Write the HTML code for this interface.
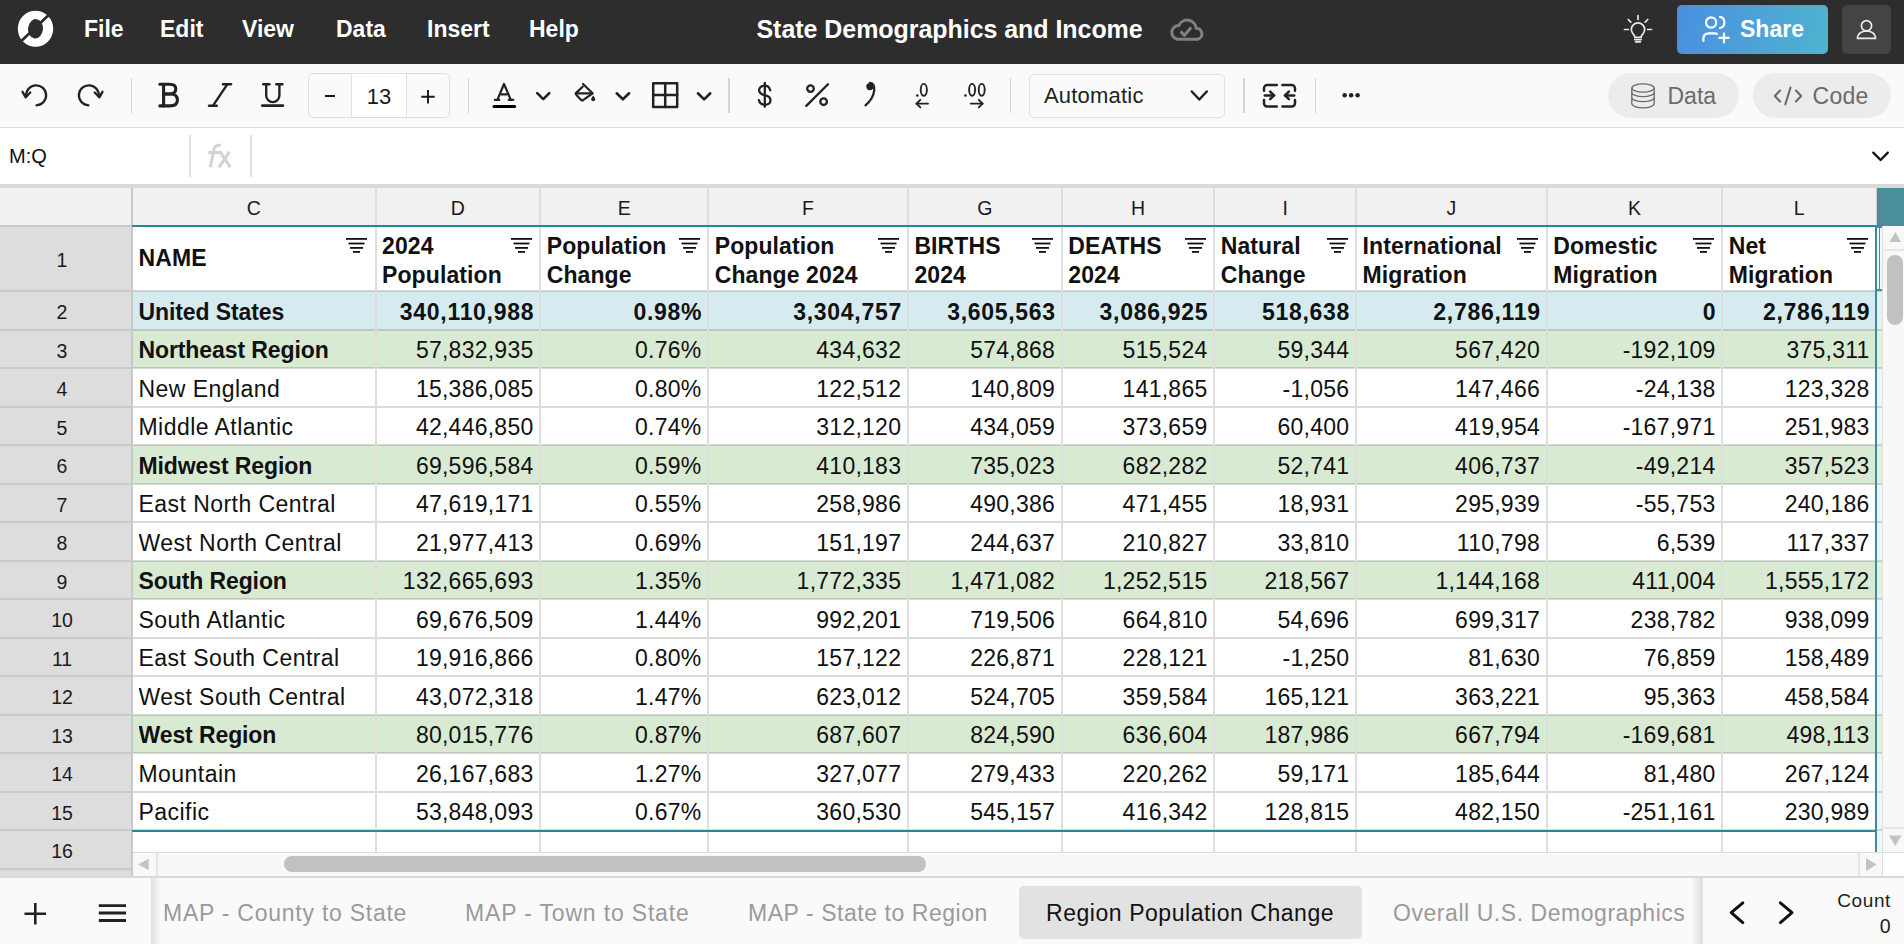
<!DOCTYPE html>
<html><head><meta charset="utf-8"><title>State Demographics and Income</title>
<style>
*{box-sizing:border-box;margin:0;padding:0}
html,body{width:1904px;height:944px;overflow:hidden;background:#fff;font-family:"Liberation Sans",sans-serif;color:#111}
.a{position:absolute}
svg{position:absolute;overflow:visible}
.menu{position:absolute;top:12px;color:#fff;font-size:23px;font-weight:bold;line-height:34px;white-space:nowrap}
.ch{position:absolute;top:188px;height:37px;background:#f1f1f1;text-align:center;font-size:19.5px;line-height:40px;color:#1a1a1a}
.vl{position:absolute;width:2px;background:#dedede}
.hl{position:absolute;height:2px;background:rgba(0,0,0,0.14)}
.cell{position:absolute;font-size:23px;white-space:nowrap;overflow:hidden;color:#111;letter-spacing:0.25px}
.b{font-weight:bold}
.num.b{letter-spacing:0.7px}
.rn{position:absolute;left:0;width:124px;text-align:center;font-size:19.5px;color:#1a1a1a}
.sep{position:absolute;width:1.2px;background:#d6d6d6}
.ic{stroke:#222;fill:none;stroke-width:2.3;stroke-linecap:round;stroke-linejoin:round}
.tab{position:absolute;top:886px;height:53px;line-height:54px;font-size:23px;color:#9a9a9a;white-space:nowrap;letter-spacing:0.55px}
</style></head><body>

<div class="a" style="left:0;top:0;width:1904px;height:64px;background:#2d2d2d"></div>
<svg style="left:0;top:0" width="70" height="64" viewBox="0 0 70 64">
<defs><mask id="lm"><rect width="70" height="64" fill="#fff"/><ellipse cx="35.5" cy="28.8" rx="7.5" ry="9.7" fill="#000" transform="rotate(6 35.5 28.8)"/><line x1="21" y1="41.2" x2="49" y2="14.7" stroke="#000" stroke-width="2.7"/></mask></defs>
<ellipse cx="35.5" cy="28.75" rx="17.7" ry="18.1" fill="#fff" mask="url(#lm)"/></svg>
<div class="menu" style="left:84px">File</div>
<div class="menu" style="left:160px">Edit</div>
<div class="menu" style="left:242px">View</div>
<div class="menu" style="left:336px">Data</div>
<div class="menu" style="left:427px">Insert</div>
<div class="menu" style="left:529px">Help</div>
<div class="menu" style="left:756.5px;top:12.4px;font-size:25px;letter-spacing:-0.05px">State Demographics and Income</div>
<svg style="left:1160px;top:10px" width="50" height="40" viewBox="1160 10 50 40"><path d="M1177.5 39.3 H1197.8 A5.6 5.6 0 0 0 1196.2 28.3 A9.1 9.1 0 0 0 1178.8 25.6 A6.9 6.9 0 0 0 1177.5 39.3 Z" fill="none" stroke="#808080" stroke-width="3" stroke-linejoin="round"/><path d="M1180.6 31.4 L1184.4 35.3 L1191.2 27.4" fill="none" stroke="#808080" stroke-width="3" stroke-linecap="butt" stroke-linejoin="miter"/></svg>
<svg style="left:1620px;top:12px" width="36" height="34" viewBox="0 0 36 34" fill="none" stroke="#e8e8e8" stroke-width="1.7" stroke-linecap="round">
<line x1="18" y1="3.5" x2="18" y2="7.5"/><line x1="8.2" y1="7.5" x2="10.8" y2="10.2"/><line x1="27.8" y1="7.5" x2="25.2" y2="10.2"/><line x1="4.5" y1="17.5" x2="8.3" y2="17.5"/><line x1="27.7" y1="17.5" x2="31.5" y2="17.5"/>
<path d="M14.8 25.4 V24.6 C14.8 23 11.3 21.5 11.3 17.6 A6.7 6.7 0 0 1 24.7 17.6 C24.7 21.5 21.2 23 21.2 24.6 V25.4 Z" stroke-linejoin="round"/><line x1="14.8" y1="27.6" x2="21.2" y2="27.6"/><line x1="15.6" y1="29.8" x2="20.4" y2="29.8"/></svg>
<div class="a" style="left:1677px;top:5px;width:151px;height:49px;border-radius:5px;background:linear-gradient(100deg,#4a8fe0 0%,#4fb4cf 100%)"></div>
<svg style="left:1700px;top:14px" width="32" height="32" viewBox="0 0 32 32" fill="none" stroke="#fff" stroke-width="2.2" stroke-linecap="round">
<circle cx="11.1" cy="8.5" r="5.1"/><path d="M20 2.9 A5.7 5.7 0 0 1 20 14"/><path d="M3.4 27 V24.8 Q3.4 19.4 8.8 19.4 H15.5 Q16.5 19.6 17 20"/><line x1="24" y1="19.6" x2="24" y2="28.4"/><line x1="19.3" y1="23.8" x2="28.8" y2="23.8"/></svg>
<div class="menu" style="left:1740px;top:12px">Share</div>
<div class="a" style="left:1842px;top:5px;width:49px;height:49px;border-radius:5px;background:#444"></div>
<svg style="left:1852px;top:16px" width="28" height="26" viewBox="0 0 28 26" fill="none" stroke="#ececec" stroke-width="1.7"><circle cx="14.5" cy="9.7" r="5.1"/><path d="M5.5 22.4 C5.5 17.6 9.6 15 14.5 15 C19.4 15 23.5 17.6 23.5 22.4 Z" stroke-linejoin="round"/></svg>
<div class="a" style="left:0;top:64px;width:1904px;height:64px;background:#fafafa;border-bottom:1.5px solid #dcdcdc"></div>
<svg style="left:16px;top:78px" width="40" height="34" viewBox="0 0 40 34"><path class="ic" d="M20.5 27.3 A10 10 0 1 0 10.2 18.5"/><path class="ic" d="M6.5 13.8 L9.7 19.3 L14.3 14.5"/></svg>
<svg style="left:68.5px;top:78px" width="40" height="34" viewBox="0 0 40 34"><g transform="translate(40 0) scale(-1 1)"><path class="ic" d="M20.5 27.3 A10 10 0 1 0 10.2 18.5"/><path class="ic" d="M6.5 13.8 L9.7 19.3 L14.3 14.5"/></g></svg>
<div class="sep" style="left:131.3px;top:78px;height:35px"></div>
<svg style="left:150px;top:76px" width="140" height="38" viewBox="150 76 140 38">
<g class="ic" style="stroke-width:3.1" transform="translate(1 0)">
<path d="M158.8 84.3 H168.5 C173 84.3 174.8 86.5 174.8 89 C174.8 91.8 172.6 94 168.5 94 H162.8"/>
<path d="M162.8 94 H169.5 C174.5 94 176.4 96.8 176.4 100 C176.4 103.5 173.8 105.9 169 105.9 H158.8"/>
<line x1="162.6" y1="84.3" x2="162.6" y2="105.9"/>
</g>
<g class="ic" style="stroke-width:2.4">
<line x1="223" y1="84.3" x2="231" y2="84.3"/><line x1="227.3" y1="84.3" x2="213" y2="105.7"/><line x1="209" y1="105.7" x2="216.8" y2="105.7"/>
</g>
<g class="ic" style="stroke-width:2.4">
<line x1="263.2" y1="84.3" x2="269.4" y2="84.3"/><line x1="276.3" y1="84.3" x2="282.4" y2="84.3"/>
<path d="M266.2 84.3 V95.5 A6.6 6.6 0 0 0 279.4 95.5 V84.3"/>
<line x1="262.3" y1="105.6" x2="282.9" y2="105.6" style="stroke-width:2.7"/>
</g></svg>
<div class="a" style="left:307.8px;top:73px;width:142.2px;height:45px;border:1.5px solid #dedede;border-radius:5px;background:#fafafa"></div>
<div class="a" style="left:351px;top:74px;width:55.5px;height:43px;background:#fff;border-left:1.5px solid #e2e2e2;border-right:1.5px solid #e2e2e2"></div>
<div class="a" style="left:325.3px;top:94.9px;width:9.4px;height:2.4px;background:#1a1a1a"></div>
<div class="a" style="left:352.5px;top:78px;width:53px;text-align:center;font-size:22px;line-height:38px;color:#1a1a1a">13</div>
<svg style="left:420px;top:89px" width="16" height="16" viewBox="0 0 16 16"><path d="M1.3 7.8 H14.7 M8 1 V14.6" stroke="#1a1a1a" stroke-width="1.9" fill="none"/></svg>
<div class="sep" style="left:467.9px;top:78px;height:35px"></div>
<svg style="left:486px;top:76px" width="130" height="38" viewBox="486 76 130 38">
<g class="ic" style="stroke-width:2.2"><path d="M497.5 99.6 L504 84 L510.7 99.6"/><line x1="501.2" y1="94.3" x2="507" y2="94.3"/><line x1="494.8" y1="99.8" x2="499.3" y2="99.8"/><line x1="508.7" y1="99.8" x2="513.3" y2="99.8"/></g>
<line x1="494" y1="106.6" x2="514.6" y2="106.6" stroke="#000" stroke-width="3" stroke-linecap="round"/>
<path class="ic" d="M537.2 93.1 L543.3 99.1 L549.3 93.1" style="stroke-width:2.6"/>
<g class="ic" style="stroke-width:2.2"><path d="M583 84 L592.6 93.3 L583.4 99.9 Q582.3 100.9 581.2 99.9 L576.2 94.8 Q575.3 93.8 576.2 92.9 L582.6 86.7"/><line x1="575.8" y1="93.4" x2="592.3" y2="93.4"/></g>
<path d="M593.2 95.6 Q595.2 98.2 595.2 99.2 A2 2 0 0 1 591.2 99.2 Q591.2 98.2 593.2 95.6 Z" fill="#222"/>
</svg>
<svg style="left:606px;top:76px" width="120" height="38" viewBox="606 76 120 38"><path class="ic" d="M616.7 93.3 L622.9 99.3 L629.1 93.3" style="stroke-width:2.6"/><g class="ic" style="stroke-width:2.5"><rect x="653.2" y="83.2" width="24" height="23.8"/><line x1="665.2" y1="83.2" x2="665.2" y2="107"/><line x1="653.2" y1="95.1" x2="677.2" y2="95.1"/></g><path class="ic" d="M697.9 93.3 L704.1 99.4 L710.3 93.3" style="stroke-width:2.6"/></svg>
<div class="sep" style="left:728.4px;top:78px;height:35px"></div>
<svg style="left:750px;top:78px" width="30" height="34" viewBox="750 78 30 34"><g class="ic" style="stroke-width:2.3"><path d="M770.2 90.3 C769.4 87.3 767.3 85.7 764.8 85.7 C761.6 85.7 759.1 87.6 759.1 90.3 C759.1 93.2 761.5 94.4 764.8 95.2 C768.3 96 770.5 97.6 770.5 100.5 C770.5 103 768 104.8 764.8 104.8 C761.8 104.8 759.5 103.1 758.9 100.1"/><line x1="764.8" y1="83" x2="764.8" y2="106.8"/></g></svg>
<svg style="left:800px;top:78px" width="200" height="34" viewBox="800 78 200 34">
<g class="ic" style="stroke-width:2.3"><circle cx="810.5" cy="88.6" r="3.3"/><circle cx="823.6" cy="101.7" r="3.3"/><line x1="806.3" y1="105.9" x2="828" y2="84.2"/></g>
<path d="M870 82.8 C873.5 83 874.6 86.5 874.2 90.5 C873.6 96 870 101.5 865.5 105.3" fill="none" stroke="#222" stroke-width="2.3" stroke-linecap="round"/><circle cx="869.9" cy="86.6" r="3.6" fill="#222"/>
</svg>
<svg style="left:900px;top:78px" width="100" height="22" viewBox="900 78 100 22"><g fill="none" stroke="#222" stroke-width="1.9"><ellipse cx="923.8" cy="89.8" rx="3.1" ry="5.9"/><ellipse cx="972.1" cy="89.8" rx="3" ry="5.9"/><ellipse cx="981.7" cy="89.8" rx="3" ry="5.9"/></g><g fill="#222"><circle cx="917.3" cy="95.6" r="1.25"/><circle cx="965.4" cy="95.6" r="1.25"/></g></svg>
<svg style="left:900px;top:96px" width="100" height="16" viewBox="900 96 100 16"><g class="ic" style="stroke-width:1.9"><line x1="916.5" y1="103.6" x2="928" y2="103.6"/><path d="M920.3 99.8 L916.5 103.6 L920.3 107.4"/><line x1="970.8" y1="103.6" x2="982.6" y2="103.6"/><path d="M978.8 99.8 L982.6 103.6 L978.8 107.4"/></g></svg>
<div class="sep" style="left:1010.2px;top:78px;height:35px"></div>
<div class="a" style="left:1029px;top:74px;width:196px;height:43.5px;border:1.5px solid #e0e0e0;border-radius:5px;background:#fafafa"></div>
<div class="a" style="left:1044px;top:78px;font-size:22px;line-height:36px;color:#222;letter-spacing:0.2px">Automatic</div>
<svg style="left:1185px;top:85px" width="30" height="22" viewBox="1185 85 30 22"><path class="ic" d="M1191.8 91.5 L1199.3 99.5 L1206.8 91.5" style="stroke-width:2.5"/></svg>
<div class="sep" style="left:1243.4px;top:78px;height:35px"></div>
<svg style="left:1258px;top:80px" width="44" height="32" viewBox="1258 80 44 32"><g class="ic" style="stroke-width:2.5">
<path d="M1264 90.8 V88.3 A3.2 3.2 0 0 1 1267.2 85.1 H1276.8"/><path d="M1264 100 V103.3 A3.2 3.2 0 0 0 1267.2 106.5 H1276.8"/>
<path d="M1295 90.8 V88.3 A3.2 3.2 0 0 0 1291.8 85.1 H1282.4"/><path d="M1295 100 V103.3 A3.2 3.2 0 0 1 1291.8 106.5 H1282.4"/>
<line x1="1264.8" y1="95.4" x2="1274" y2="95.4"/><path d="M1270.2 91.7 L1274 95.4 L1270.2 99.2"/>
<line x1="1285" y1="95.4" x2="1294.2" y2="95.4"/><path d="M1288.9 91.7 L1285 95.4 L1288.9 99.2"/>
</g></svg>
<div class="sep" style="left:1314.8px;top:78px;height:35px"></div>
<svg style="left:1338px;top:90px" width="26" height="10" viewBox="1338 90 26 10"><g fill="#222"><circle cx="1344.7" cy="95.2" r="2.25"/><circle cx="1351.1" cy="95.2" r="2.25"/><circle cx="1357.6" cy="95.2" r="2.25"/></g></svg>
<div class="a" style="left:1608px;top:73px;width:131px;height:45px;border-radius:23px;background:#ececec"></div>
<svg style="left:1628px;top:80px" width="30" height="32" viewBox="0 0 30 32" fill="none" stroke="#6a6a6a" stroke-width="1.3">
<ellipse cx="15" cy="8" rx="11.2" ry="4.2"/><path d="M3.8 8 V23.6 A11.2 4.2 0 0 0 26.2 23.6 V8"/><path d="M3.8 12.5 A11.2 4.2 0 0 0 26.2 12.5"/><path d="M3.8 17.5 A11.2 4.2 0 0 0 26.2 17.5"/></svg>
<div class="a" style="left:1667.5px;top:78px;font-size:23px;line-height:36px;color:#6a6a6a">Data</div>
<div class="a" style="left:1753px;top:73px;width:138px;height:45px;border-radius:23px;background:#ececec"></div>
<svg style="left:1770px;top:84px" width="36" height="24" viewBox="0 0 36 24" fill="none" stroke="#6a6a6a" stroke-width="2.1" stroke-linecap="round" stroke-linejoin="round"><path d="M10 6.5 L4.8 12 L10 17.5"/><path d="M26 6.5 L31.2 12 L26 17.5"/><line x1="20.5" y1="3.5" x2="15.3" y2="20.5"/></svg>
<div class="a" style="left:1812.5px;top:78px;font-size:23px;line-height:36px;color:#6a6a6a;letter-spacing:0.3px">Code</div>
<div class="a" style="left:0;top:128px;width:1904px;height:56px;background:#fff"></div>
<div class="a" style="left:9px;top:139px;font-size:20px;line-height:34px;color:#111">M:Q</div>
<div class="sep" style="left:189px;top:135px;height:42px;width:2px;background:#dedede"></div>
<svg style="left:200px;top:138px" width="40" height="36" viewBox="200 138 40 36"><g fill="none" stroke="#d3d3d3" stroke-width="3"><path d="M220.8 145.3 C218.3 144.9 214.8 145.2 213.9 149.5 L210.4 167.3"/><line x1="208.2" y1="152.6" x2="221" y2="152.6"/><line x1="218.9" y1="167.3" x2="229.6" y2="151.6"/><line x1="220" y1="151.6" x2="230.4" y2="167.3"/></g></svg>
<div class="sep" style="left:250px;top:135px;height:42px;width:2px;background:#dedede"></div>
<svg style="left:1868px;top:146px" width="26" height="20" viewBox="0 0 26 20"><path class="ic" d="M5.3 6.6 L12.6 14 L19.8 6.6" style="stroke-width:2.3;stroke:#111"/></svg>
<div class="a" style="left:0;top:184px;width:1904px;height:4px;background:#dadada"></div>
<div class="a" style="left:0;top:188px;width:132.5px;height:690px;background:#dddddd"></div>
<div class="a" style="left:132.5px;top:225.5px;width:1750px;height:626px;background:#fff"></div>
<div class="ch" style="left:132px;width:243.5px">C</div>
<div class="ch" style="left:375.5px;width:164.7px">D</div>
<div class="ch" style="left:540.2px;width:168px">E</div>
<div class="ch" style="left:708.2px;width:199.7px">F</div>
<div class="ch" style="left:907.9px;width:153.9px">G</div>
<div class="ch" style="left:1061.8px;width:152.4px">H</div>
<div class="ch" style="left:1214.2px;width:141.8px">I</div>
<div class="ch" style="left:1356px;width:190.7px">J</div>
<div class="ch" style="left:1546.7px;width:175.5px">K</div>
<div class="ch" style="left:1722.2px;width:154.1px">L</div>
<div class="a" style="left:0;top:188px;width:132px;height:38.5px;background:#f1f1f1;border-bottom:2px solid #c9c9c9"></div>
<div class="a" style="left:1877px;top:188px;width:27px;height:37.5px;background:#4a8e9b"></div>
<div class="a" style="left:132.5px;top:291px;width:1744px;height:38.5px;background:#d6ebf0"></div>
<div class="a" style="left:1877px;top:291px;width:5px;height:38.5px;background:#e3f1f4"></div>
<div class="a" style="left:132.5px;top:329.5px;width:1744px;height:38.5px;background:#d9ead3"></div>
<div class="a" style="left:1877px;top:329.5px;width:5px;height:38.5px;background:#e4f0df"></div>
<div class="a" style="left:132.5px;top:445px;width:1744px;height:38.5px;background:#d9ead3"></div>
<div class="a" style="left:1877px;top:445px;width:5px;height:38.5px;background:#e4f0df"></div>
<div class="a" style="left:132.5px;top:560.5px;width:1744px;height:38.5px;background:#d9ead3"></div>
<div class="a" style="left:1877px;top:560.5px;width:5px;height:38.5px;background:#e4f0df"></div>
<div class="a" style="left:132.5px;top:714.5px;width:1744px;height:38.5px;background:#d9ead3"></div>
<div class="a" style="left:1877px;top:714.5px;width:5px;height:38.5px;background:#e4f0df"></div>
<div class="a" style="left:1877px;top:291px;width:5px;height:560px;background:#eef6f8;z-index:0"></div>
<div class="a" style="left:1877px;top:291px;width:5px;height:38.5px;background:#e3f1f4"></div>
<div class="a" style="left:1877px;top:329.5px;width:5px;height:38.5px;background:#e4f0df"></div>
<div class="a" style="left:1877px;top:445px;width:5px;height:38.5px;background:#e4f0df"></div>
<div class="a" style="left:1877px;top:560.5px;width:5px;height:38.5px;background:#e4f0df"></div>
<div class="a" style="left:1877px;top:714.5px;width:5px;height:38.5px;background:#e4f0df"></div>
<div class="hl" style="left:132.5px;top:290px;width:1750px"></div>
<div class="hl" style="left:132.5px;top:328.5px;width:1750px"></div>
<div class="hl" style="left:132.5px;top:367px;width:1750px"></div>
<div class="hl" style="left:132.5px;top:405.5px;width:1750px"></div>
<div class="hl" style="left:132.5px;top:444px;width:1750px"></div>
<div class="hl" style="left:132.5px;top:482.5px;width:1750px"></div>
<div class="hl" style="left:132.5px;top:521px;width:1750px"></div>
<div class="hl" style="left:132.5px;top:559.5px;width:1750px"></div>
<div class="hl" style="left:132.5px;top:598px;width:1750px"></div>
<div class="hl" style="left:132.5px;top:636.5px;width:1750px"></div>
<div class="hl" style="left:132.5px;top:675px;width:1750px"></div>
<div class="hl" style="left:132.5px;top:713.5px;width:1750px"></div>
<div class="hl" style="left:132.5px;top:752px;width:1750px"></div>
<div class="hl" style="left:132.5px;top:790.5px;width:1750px"></div>
<div class="hl" style="left:132.5px;top:829px;width:1750px"></div>
<div class="hl" style="left:132.5px;top:867.5px;width:1750px"></div>
<div class="hl" style="left:0;top:290px;width:132.5px;background:#cacaca"></div>
<div class="hl" style="left:0;top:328.5px;width:132.5px;background:#cacaca"></div>
<div class="hl" style="left:0;top:367px;width:132.5px;background:#cacaca"></div>
<div class="hl" style="left:0;top:405.5px;width:132.5px;background:#cacaca"></div>
<div class="hl" style="left:0;top:444px;width:132.5px;background:#cacaca"></div>
<div class="hl" style="left:0;top:482.5px;width:132.5px;background:#cacaca"></div>
<div class="hl" style="left:0;top:521px;width:132.5px;background:#cacaca"></div>
<div class="hl" style="left:0;top:559.5px;width:132.5px;background:#cacaca"></div>
<div class="hl" style="left:0;top:598px;width:132.5px;background:#cacaca"></div>
<div class="hl" style="left:0;top:636.5px;width:132.5px;background:#cacaca"></div>
<div class="hl" style="left:0;top:675px;width:132.5px;background:#cacaca"></div>
<div class="hl" style="left:0;top:713.5px;width:132.5px;background:#cacaca"></div>
<div class="hl" style="left:0;top:752px;width:132.5px;background:#cacaca"></div>
<div class="hl" style="left:0;top:790.5px;width:132.5px;background:#cacaca"></div>
<div class="hl" style="left:0;top:829px;width:132.5px;background:#cacaca"></div>
<div class="hl" style="left:0;top:867.5px;width:132.5px;background:#cacaca"></div>
<div class="vl" style="left:131px;top:188px;height:664px"></div>
<div class="vl" style="left:374.5px;top:188px;height:664px"></div>
<div class="vl" style="left:539.2px;top:188px;height:664px"></div>
<div class="vl" style="left:707.2px;top:188px;height:664px"></div>
<div class="vl" style="left:906.9px;top:188px;height:664px"></div>
<div class="vl" style="left:1060.8px;top:188px;height:664px"></div>
<div class="vl" style="left:1213.2px;top:188px;height:664px"></div>
<div class="vl" style="left:1355px;top:188px;height:664px"></div>
<div class="vl" style="left:1545.7px;top:188px;height:664px"></div>
<div class="vl" style="left:1721.2px;top:188px;height:664px"></div>
<div class="cell b" style="left:138.5px;top:244px;line-height:29px;letter-spacing:0.1px">NAME</div>
<svg style="left:346px;top:236px" width="22" height="18" viewBox="0 0 22 18"><g fill="#111"><rect x="0" y="2" width="21" height="1.8"/><rect x="2.5" y="6.6" width="16" height="1.8"/><rect x="4" y="11" width="13" height="1.8"/><rect x="7" y="15" width="7" height="1.8"/></g></svg>
<div class="cell b" style="left:382px;top:232px;line-height:29px;letter-spacing:0.1px">2024<br>Population</div>
<svg style="left:510.7px;top:236px" width="22" height="18" viewBox="0 0 22 18"><g fill="#111"><rect x="0" y="2" width="21" height="1.8"/><rect x="2.5" y="6.6" width="16" height="1.8"/><rect x="4" y="11" width="13" height="1.8"/><rect x="7" y="15" width="7" height="1.8"/></g></svg>
<div class="cell b" style="left:546.7px;top:232px;line-height:29px;letter-spacing:0.1px">Population<br>Change</div>
<svg style="left:678.7px;top:236px" width="22" height="18" viewBox="0 0 22 18"><g fill="#111"><rect x="0" y="2" width="21" height="1.8"/><rect x="2.5" y="6.6" width="16" height="1.8"/><rect x="4" y="11" width="13" height="1.8"/><rect x="7" y="15" width="7" height="1.8"/></g></svg>
<div class="cell b" style="left:714.7px;top:232px;line-height:29px;letter-spacing:0.1px">Population<br>Change 2024</div>
<svg style="left:878.4px;top:236px" width="22" height="18" viewBox="0 0 22 18"><g fill="#111"><rect x="0" y="2" width="21" height="1.8"/><rect x="2.5" y="6.6" width="16" height="1.8"/><rect x="4" y="11" width="13" height="1.8"/><rect x="7" y="15" width="7" height="1.8"/></g></svg>
<div class="cell b" style="left:914.4px;top:232px;line-height:29px;letter-spacing:0.1px">BIRTHS<br>2024</div>
<svg style="left:1032.3px;top:236px" width="22" height="18" viewBox="0 0 22 18"><g fill="#111"><rect x="0" y="2" width="21" height="1.8"/><rect x="2.5" y="6.6" width="16" height="1.8"/><rect x="4" y="11" width="13" height="1.8"/><rect x="7" y="15" width="7" height="1.8"/></g></svg>
<div class="cell b" style="left:1068.3px;top:232px;line-height:29px;letter-spacing:0.1px">DEATHS<br>2024</div>
<svg style="left:1184.7px;top:236px" width="22" height="18" viewBox="0 0 22 18"><g fill="#111"><rect x="0" y="2" width="21" height="1.8"/><rect x="2.5" y="6.6" width="16" height="1.8"/><rect x="4" y="11" width="13" height="1.8"/><rect x="7" y="15" width="7" height="1.8"/></g></svg>
<div class="cell b" style="left:1220.7px;top:232px;line-height:29px;letter-spacing:0.1px">Natural<br>Change</div>
<svg style="left:1326.5px;top:236px" width="22" height="18" viewBox="0 0 22 18"><g fill="#111"><rect x="0" y="2" width="21" height="1.8"/><rect x="2.5" y="6.6" width="16" height="1.8"/><rect x="4" y="11" width="13" height="1.8"/><rect x="7" y="15" width="7" height="1.8"/></g></svg>
<div class="cell b" style="left:1362.5px;top:232px;line-height:29px;letter-spacing:0.1px">International<br>Migration</div>
<svg style="left:1517.2px;top:236px" width="22" height="18" viewBox="0 0 22 18"><g fill="#111"><rect x="0" y="2" width="21" height="1.8"/><rect x="2.5" y="6.6" width="16" height="1.8"/><rect x="4" y="11" width="13" height="1.8"/><rect x="7" y="15" width="7" height="1.8"/></g></svg>
<div class="cell b" style="left:1553.2px;top:232px;line-height:29px;letter-spacing:0.1px">Domestic<br>Migration</div>
<svg style="left:1692.7px;top:236px" width="22" height="18" viewBox="0 0 22 18"><g fill="#111"><rect x="0" y="2" width="21" height="1.8"/><rect x="2.5" y="6.6" width="16" height="1.8"/><rect x="4" y="11" width="13" height="1.8"/><rect x="7" y="15" width="7" height="1.8"/></g></svg>
<div class="cell b" style="left:1728.7px;top:232px;line-height:29px;letter-spacing:0.1px">Net<br>Migration</div>
<svg style="left:1846.8px;top:236px" width="22" height="18" viewBox="0 0 22 18"><g fill="#111"><rect x="0" y="2" width="21" height="1.8"/><rect x="2.5" y="6.6" width="16" height="1.8"/><rect x="4" y="11" width="13" height="1.8"/><rect x="7" y="15" width="7" height="1.8"/></g></svg>
<div class="cell b" style="left:138.5px;top:292.5px;width:230px;height:38.5px;line-height:38.5px;letter-spacing:-0.1px;">United States</div>
<div class="cell b num" style="left:382px;top:292.5px;width:152.2px;height:38.5px;line-height:38.5px;text-align:right;">340,110,988</div>
<div class="cell b num" style="left:546.7px;top:292.5px;width:155.5px;height:38.5px;line-height:38.5px;text-align:right;">0.98%</div>
<div class="cell b num" style="left:714.7px;top:292.5px;width:187.2px;height:38.5px;line-height:38.5px;text-align:right;">3,304,757</div>
<div class="cell b num" style="left:914.4px;top:292.5px;width:141.4px;height:38.5px;line-height:38.5px;text-align:right;">3,605,563</div>
<div class="cell b num" style="left:1068.3px;top:292.5px;width:139.9px;height:38.5px;line-height:38.5px;text-align:right;">3,086,925</div>
<div class="cell b num" style="left:1220.7px;top:292.5px;width:129.3px;height:38.5px;line-height:38.5px;text-align:right;">518,638</div>
<div class="cell b num" style="left:1362.5px;top:292.5px;width:178.2px;height:38.5px;line-height:38.5px;text-align:right;">2,786,119</div>
<div class="cell b num" style="left:1553.2px;top:292.5px;width:163px;height:38.5px;line-height:38.5px;text-align:right;">0</div>
<div class="cell b num" style="left:1728.7px;top:292.5px;width:141.6px;height:38.5px;line-height:38.5px;text-align:right;">2,786,119</div>
<div class="cell b" style="left:138.5px;top:331px;width:230px;height:38.5px;line-height:38.5px;letter-spacing:-0.1px;">Northeast Region</div>
<div class="cell num" style="left:382px;top:331px;width:151.5px;height:38.5px;line-height:38.5px;text-align:right;">57,832,935</div>
<div class="cell num" style="left:546.7px;top:331px;width:154.8px;height:38.5px;line-height:38.5px;text-align:right;">0.76%</div>
<div class="cell num" style="left:714.7px;top:331px;width:186.5px;height:38.5px;line-height:38.5px;text-align:right;">434,632</div>
<div class="cell num" style="left:914.4px;top:331px;width:140.7px;height:38.5px;line-height:38.5px;text-align:right;">574,868</div>
<div class="cell num" style="left:1068.3px;top:331px;width:139.2px;height:38.5px;line-height:38.5px;text-align:right;">515,524</div>
<div class="cell num" style="left:1220.7px;top:331px;width:128.6px;height:38.5px;line-height:38.5px;text-align:right;">59,344</div>
<div class="cell num" style="left:1362.5px;top:331px;width:177.5px;height:38.5px;line-height:38.5px;text-align:right;">567,420</div>
<div class="cell num" style="left:1553.2px;top:331px;width:162.3px;height:38.5px;line-height:38.5px;text-align:right;">-192,109</div>
<div class="cell num" style="left:1728.7px;top:331px;width:140.9px;height:38.5px;line-height:38.5px;text-align:right;">375,311</div>
<div class="cell" style="left:138.5px;top:369.5px;width:230px;height:38.5px;line-height:38.5px;letter-spacing:0.45px;">New England</div>
<div class="cell num" style="left:382px;top:369.5px;width:151.5px;height:38.5px;line-height:38.5px;text-align:right;">15,386,085</div>
<div class="cell num" style="left:546.7px;top:369.5px;width:154.8px;height:38.5px;line-height:38.5px;text-align:right;">0.80%</div>
<div class="cell num" style="left:714.7px;top:369.5px;width:186.5px;height:38.5px;line-height:38.5px;text-align:right;">122,512</div>
<div class="cell num" style="left:914.4px;top:369.5px;width:140.7px;height:38.5px;line-height:38.5px;text-align:right;">140,809</div>
<div class="cell num" style="left:1068.3px;top:369.5px;width:139.2px;height:38.5px;line-height:38.5px;text-align:right;">141,865</div>
<div class="cell num" style="left:1220.7px;top:369.5px;width:128.6px;height:38.5px;line-height:38.5px;text-align:right;">-1,056</div>
<div class="cell num" style="left:1362.5px;top:369.5px;width:177.5px;height:38.5px;line-height:38.5px;text-align:right;">147,466</div>
<div class="cell num" style="left:1553.2px;top:369.5px;width:162.3px;height:38.5px;line-height:38.5px;text-align:right;">-24,138</div>
<div class="cell num" style="left:1728.7px;top:369.5px;width:140.9px;height:38.5px;line-height:38.5px;text-align:right;">123,328</div>
<div class="cell" style="left:138.5px;top:408px;width:230px;height:38.5px;line-height:38.5px;letter-spacing:0.45px;">Middle Atlantic</div>
<div class="cell num" style="left:382px;top:408px;width:151.5px;height:38.5px;line-height:38.5px;text-align:right;">42,446,850</div>
<div class="cell num" style="left:546.7px;top:408px;width:154.8px;height:38.5px;line-height:38.5px;text-align:right;">0.74%</div>
<div class="cell num" style="left:714.7px;top:408px;width:186.5px;height:38.5px;line-height:38.5px;text-align:right;">312,120</div>
<div class="cell num" style="left:914.4px;top:408px;width:140.7px;height:38.5px;line-height:38.5px;text-align:right;">434,059</div>
<div class="cell num" style="left:1068.3px;top:408px;width:139.2px;height:38.5px;line-height:38.5px;text-align:right;">373,659</div>
<div class="cell num" style="left:1220.7px;top:408px;width:128.6px;height:38.5px;line-height:38.5px;text-align:right;">60,400</div>
<div class="cell num" style="left:1362.5px;top:408px;width:177.5px;height:38.5px;line-height:38.5px;text-align:right;">419,954</div>
<div class="cell num" style="left:1553.2px;top:408px;width:162.3px;height:38.5px;line-height:38.5px;text-align:right;">-167,971</div>
<div class="cell num" style="left:1728.7px;top:408px;width:140.9px;height:38.5px;line-height:38.5px;text-align:right;">251,983</div>
<div class="cell b" style="left:138.5px;top:446.5px;width:230px;height:38.5px;line-height:38.5px;letter-spacing:-0.1px;">Midwest Region</div>
<div class="cell num" style="left:382px;top:446.5px;width:151.5px;height:38.5px;line-height:38.5px;text-align:right;">69,596,584</div>
<div class="cell num" style="left:546.7px;top:446.5px;width:154.8px;height:38.5px;line-height:38.5px;text-align:right;">0.59%</div>
<div class="cell num" style="left:714.7px;top:446.5px;width:186.5px;height:38.5px;line-height:38.5px;text-align:right;">410,183</div>
<div class="cell num" style="left:914.4px;top:446.5px;width:140.7px;height:38.5px;line-height:38.5px;text-align:right;">735,023</div>
<div class="cell num" style="left:1068.3px;top:446.5px;width:139.2px;height:38.5px;line-height:38.5px;text-align:right;">682,282</div>
<div class="cell num" style="left:1220.7px;top:446.5px;width:128.6px;height:38.5px;line-height:38.5px;text-align:right;">52,741</div>
<div class="cell num" style="left:1362.5px;top:446.5px;width:177.5px;height:38.5px;line-height:38.5px;text-align:right;">406,737</div>
<div class="cell num" style="left:1553.2px;top:446.5px;width:162.3px;height:38.5px;line-height:38.5px;text-align:right;">-49,214</div>
<div class="cell num" style="left:1728.7px;top:446.5px;width:140.9px;height:38.5px;line-height:38.5px;text-align:right;">357,523</div>
<div class="cell" style="left:138.5px;top:485px;width:230px;height:38.5px;line-height:38.5px;letter-spacing:0.45px;">East North Central</div>
<div class="cell num" style="left:382px;top:485px;width:151.5px;height:38.5px;line-height:38.5px;text-align:right;">47,619,171</div>
<div class="cell num" style="left:546.7px;top:485px;width:154.8px;height:38.5px;line-height:38.5px;text-align:right;">0.55%</div>
<div class="cell num" style="left:714.7px;top:485px;width:186.5px;height:38.5px;line-height:38.5px;text-align:right;">258,986</div>
<div class="cell num" style="left:914.4px;top:485px;width:140.7px;height:38.5px;line-height:38.5px;text-align:right;">490,386</div>
<div class="cell num" style="left:1068.3px;top:485px;width:139.2px;height:38.5px;line-height:38.5px;text-align:right;">471,455</div>
<div class="cell num" style="left:1220.7px;top:485px;width:128.6px;height:38.5px;line-height:38.5px;text-align:right;">18,931</div>
<div class="cell num" style="left:1362.5px;top:485px;width:177.5px;height:38.5px;line-height:38.5px;text-align:right;">295,939</div>
<div class="cell num" style="left:1553.2px;top:485px;width:162.3px;height:38.5px;line-height:38.5px;text-align:right;">-55,753</div>
<div class="cell num" style="left:1728.7px;top:485px;width:140.9px;height:38.5px;line-height:38.5px;text-align:right;">240,186</div>
<div class="cell" style="left:138.5px;top:523.5px;width:230px;height:38.5px;line-height:38.5px;letter-spacing:0.45px;">West North Central</div>
<div class="cell num" style="left:382px;top:523.5px;width:151.5px;height:38.5px;line-height:38.5px;text-align:right;">21,977,413</div>
<div class="cell num" style="left:546.7px;top:523.5px;width:154.8px;height:38.5px;line-height:38.5px;text-align:right;">0.69%</div>
<div class="cell num" style="left:714.7px;top:523.5px;width:186.5px;height:38.5px;line-height:38.5px;text-align:right;">151,197</div>
<div class="cell num" style="left:914.4px;top:523.5px;width:140.7px;height:38.5px;line-height:38.5px;text-align:right;">244,637</div>
<div class="cell num" style="left:1068.3px;top:523.5px;width:139.2px;height:38.5px;line-height:38.5px;text-align:right;">210,827</div>
<div class="cell num" style="left:1220.7px;top:523.5px;width:128.6px;height:38.5px;line-height:38.5px;text-align:right;">33,810</div>
<div class="cell num" style="left:1362.5px;top:523.5px;width:177.5px;height:38.5px;line-height:38.5px;text-align:right;">110,798</div>
<div class="cell num" style="left:1553.2px;top:523.5px;width:162.3px;height:38.5px;line-height:38.5px;text-align:right;">6,539</div>
<div class="cell num" style="left:1728.7px;top:523.5px;width:140.9px;height:38.5px;line-height:38.5px;text-align:right;">117,337</div>
<div class="cell b" style="left:138.5px;top:562px;width:230px;height:38.5px;line-height:38.5px;letter-spacing:-0.1px;">South Region</div>
<div class="cell num" style="left:382px;top:562px;width:151.5px;height:38.5px;line-height:38.5px;text-align:right;">132,665,693</div>
<div class="cell num" style="left:546.7px;top:562px;width:154.8px;height:38.5px;line-height:38.5px;text-align:right;">1.35%</div>
<div class="cell num" style="left:714.7px;top:562px;width:186.5px;height:38.5px;line-height:38.5px;text-align:right;">1,772,335</div>
<div class="cell num" style="left:914.4px;top:562px;width:140.7px;height:38.5px;line-height:38.5px;text-align:right;">1,471,082</div>
<div class="cell num" style="left:1068.3px;top:562px;width:139.2px;height:38.5px;line-height:38.5px;text-align:right;">1,252,515</div>
<div class="cell num" style="left:1220.7px;top:562px;width:128.6px;height:38.5px;line-height:38.5px;text-align:right;">218,567</div>
<div class="cell num" style="left:1362.5px;top:562px;width:177.5px;height:38.5px;line-height:38.5px;text-align:right;">1,144,168</div>
<div class="cell num" style="left:1553.2px;top:562px;width:162.3px;height:38.5px;line-height:38.5px;text-align:right;">411,004</div>
<div class="cell num" style="left:1728.7px;top:562px;width:140.9px;height:38.5px;line-height:38.5px;text-align:right;">1,555,172</div>
<div class="cell" style="left:138.5px;top:600.5px;width:230px;height:38.5px;line-height:38.5px;letter-spacing:0.45px;">South Atlantic</div>
<div class="cell num" style="left:382px;top:600.5px;width:151.5px;height:38.5px;line-height:38.5px;text-align:right;">69,676,509</div>
<div class="cell num" style="left:546.7px;top:600.5px;width:154.8px;height:38.5px;line-height:38.5px;text-align:right;">1.44%</div>
<div class="cell num" style="left:714.7px;top:600.5px;width:186.5px;height:38.5px;line-height:38.5px;text-align:right;">992,201</div>
<div class="cell num" style="left:914.4px;top:600.5px;width:140.7px;height:38.5px;line-height:38.5px;text-align:right;">719,506</div>
<div class="cell num" style="left:1068.3px;top:600.5px;width:139.2px;height:38.5px;line-height:38.5px;text-align:right;">664,810</div>
<div class="cell num" style="left:1220.7px;top:600.5px;width:128.6px;height:38.5px;line-height:38.5px;text-align:right;">54,696</div>
<div class="cell num" style="left:1362.5px;top:600.5px;width:177.5px;height:38.5px;line-height:38.5px;text-align:right;">699,317</div>
<div class="cell num" style="left:1553.2px;top:600.5px;width:162.3px;height:38.5px;line-height:38.5px;text-align:right;">238,782</div>
<div class="cell num" style="left:1728.7px;top:600.5px;width:140.9px;height:38.5px;line-height:38.5px;text-align:right;">938,099</div>
<div class="cell" style="left:138.5px;top:639px;width:230px;height:38.5px;line-height:38.5px;letter-spacing:0.45px;">East South Central</div>
<div class="cell num" style="left:382px;top:639px;width:151.5px;height:38.5px;line-height:38.5px;text-align:right;">19,916,866</div>
<div class="cell num" style="left:546.7px;top:639px;width:154.8px;height:38.5px;line-height:38.5px;text-align:right;">0.80%</div>
<div class="cell num" style="left:714.7px;top:639px;width:186.5px;height:38.5px;line-height:38.5px;text-align:right;">157,122</div>
<div class="cell num" style="left:914.4px;top:639px;width:140.7px;height:38.5px;line-height:38.5px;text-align:right;">226,871</div>
<div class="cell num" style="left:1068.3px;top:639px;width:139.2px;height:38.5px;line-height:38.5px;text-align:right;">228,121</div>
<div class="cell num" style="left:1220.7px;top:639px;width:128.6px;height:38.5px;line-height:38.5px;text-align:right;">-1,250</div>
<div class="cell num" style="left:1362.5px;top:639px;width:177.5px;height:38.5px;line-height:38.5px;text-align:right;">81,630</div>
<div class="cell num" style="left:1553.2px;top:639px;width:162.3px;height:38.5px;line-height:38.5px;text-align:right;">76,859</div>
<div class="cell num" style="left:1728.7px;top:639px;width:140.9px;height:38.5px;line-height:38.5px;text-align:right;">158,489</div>
<div class="cell" style="left:138.5px;top:677.5px;width:230px;height:38.5px;line-height:38.5px;letter-spacing:0.45px;">West South Central</div>
<div class="cell num" style="left:382px;top:677.5px;width:151.5px;height:38.5px;line-height:38.5px;text-align:right;">43,072,318</div>
<div class="cell num" style="left:546.7px;top:677.5px;width:154.8px;height:38.5px;line-height:38.5px;text-align:right;">1.47%</div>
<div class="cell num" style="left:714.7px;top:677.5px;width:186.5px;height:38.5px;line-height:38.5px;text-align:right;">623,012</div>
<div class="cell num" style="left:914.4px;top:677.5px;width:140.7px;height:38.5px;line-height:38.5px;text-align:right;">524,705</div>
<div class="cell num" style="left:1068.3px;top:677.5px;width:139.2px;height:38.5px;line-height:38.5px;text-align:right;">359,584</div>
<div class="cell num" style="left:1220.7px;top:677.5px;width:128.6px;height:38.5px;line-height:38.5px;text-align:right;">165,121</div>
<div class="cell num" style="left:1362.5px;top:677.5px;width:177.5px;height:38.5px;line-height:38.5px;text-align:right;">363,221</div>
<div class="cell num" style="left:1553.2px;top:677.5px;width:162.3px;height:38.5px;line-height:38.5px;text-align:right;">95,363</div>
<div class="cell num" style="left:1728.7px;top:677.5px;width:140.9px;height:38.5px;line-height:38.5px;text-align:right;">458,584</div>
<div class="cell b" style="left:138.5px;top:716px;width:230px;height:38.5px;line-height:38.5px;letter-spacing:-0.1px;">West Region</div>
<div class="cell num" style="left:382px;top:716px;width:151.5px;height:38.5px;line-height:38.5px;text-align:right;">80,015,776</div>
<div class="cell num" style="left:546.7px;top:716px;width:154.8px;height:38.5px;line-height:38.5px;text-align:right;">0.87%</div>
<div class="cell num" style="left:714.7px;top:716px;width:186.5px;height:38.5px;line-height:38.5px;text-align:right;">687,607</div>
<div class="cell num" style="left:914.4px;top:716px;width:140.7px;height:38.5px;line-height:38.5px;text-align:right;">824,590</div>
<div class="cell num" style="left:1068.3px;top:716px;width:139.2px;height:38.5px;line-height:38.5px;text-align:right;">636,604</div>
<div class="cell num" style="left:1220.7px;top:716px;width:128.6px;height:38.5px;line-height:38.5px;text-align:right;">187,986</div>
<div class="cell num" style="left:1362.5px;top:716px;width:177.5px;height:38.5px;line-height:38.5px;text-align:right;">667,794</div>
<div class="cell num" style="left:1553.2px;top:716px;width:162.3px;height:38.5px;line-height:38.5px;text-align:right;">-169,681</div>
<div class="cell num" style="left:1728.7px;top:716px;width:140.9px;height:38.5px;line-height:38.5px;text-align:right;">498,113</div>
<div class="cell" style="left:138.5px;top:754.5px;width:230px;height:38.5px;line-height:38.5px;letter-spacing:0.45px;">Mountain</div>
<div class="cell num" style="left:382px;top:754.5px;width:151.5px;height:38.5px;line-height:38.5px;text-align:right;">26,167,683</div>
<div class="cell num" style="left:546.7px;top:754.5px;width:154.8px;height:38.5px;line-height:38.5px;text-align:right;">1.27%</div>
<div class="cell num" style="left:714.7px;top:754.5px;width:186.5px;height:38.5px;line-height:38.5px;text-align:right;">327,077</div>
<div class="cell num" style="left:914.4px;top:754.5px;width:140.7px;height:38.5px;line-height:38.5px;text-align:right;">279,433</div>
<div class="cell num" style="left:1068.3px;top:754.5px;width:139.2px;height:38.5px;line-height:38.5px;text-align:right;">220,262</div>
<div class="cell num" style="left:1220.7px;top:754.5px;width:128.6px;height:38.5px;line-height:38.5px;text-align:right;">59,171</div>
<div class="cell num" style="left:1362.5px;top:754.5px;width:177.5px;height:38.5px;line-height:38.5px;text-align:right;">185,644</div>
<div class="cell num" style="left:1553.2px;top:754.5px;width:162.3px;height:38.5px;line-height:38.5px;text-align:right;">81,480</div>
<div class="cell num" style="left:1728.7px;top:754.5px;width:140.9px;height:38.5px;line-height:38.5px;text-align:right;">267,124</div>
<div class="cell" style="left:138.5px;top:793px;width:230px;height:38.5px;line-height:38.5px;letter-spacing:0.45px;">Pacific</div>
<div class="cell num" style="left:382px;top:793px;width:151.5px;height:38.5px;line-height:38.5px;text-align:right;">53,848,093</div>
<div class="cell num" style="left:546.7px;top:793px;width:154.8px;height:38.5px;line-height:38.5px;text-align:right;">0.67%</div>
<div class="cell num" style="left:714.7px;top:793px;width:186.5px;height:38.5px;line-height:38.5px;text-align:right;">360,530</div>
<div class="cell num" style="left:914.4px;top:793px;width:140.7px;height:38.5px;line-height:38.5px;text-align:right;">545,157</div>
<div class="cell num" style="left:1068.3px;top:793px;width:139.2px;height:38.5px;line-height:38.5px;text-align:right;">416,342</div>
<div class="cell num" style="left:1220.7px;top:793px;width:128.6px;height:38.5px;line-height:38.5px;text-align:right;">128,815</div>
<div class="cell num" style="left:1362.5px;top:793px;width:177.5px;height:38.5px;line-height:38.5px;text-align:right;">482,150</div>
<div class="cell num" style="left:1553.2px;top:793px;width:162.3px;height:38.5px;line-height:38.5px;text-align:right;">-251,161</div>
<div class="cell num" style="left:1728.7px;top:793px;width:140.9px;height:38.5px;line-height:38.5px;text-align:right;">230,989</div>
<div class="rn" style="top:227.5px;height:65.5px;line-height:65.5px">1</div>
<div class="rn" style="top:293px;height:38.5px;line-height:38.5px">2</div>
<div class="rn" style="top:331.5px;height:38.5px;line-height:38.5px">3</div>
<div class="rn" style="top:370px;height:38.5px;line-height:38.5px">4</div>
<div class="rn" style="top:408.5px;height:38.5px;line-height:38.5px">5</div>
<div class="rn" style="top:447px;height:38.5px;line-height:38.5px">6</div>
<div class="rn" style="top:485.5px;height:38.5px;line-height:38.5px">7</div>
<div class="rn" style="top:524px;height:38.5px;line-height:38.5px">8</div>
<div class="rn" style="top:562.5px;height:38.5px;line-height:38.5px">9</div>
<div class="rn" style="top:601px;height:38.5px;line-height:38.5px">10</div>
<div class="rn" style="top:639.5px;height:38.5px;line-height:38.5px">11</div>
<div class="rn" style="top:678px;height:38.5px;line-height:38.5px">12</div>
<div class="rn" style="top:716.5px;height:38.5px;line-height:38.5px">13</div>
<div class="rn" style="top:755px;height:38.5px;line-height:38.5px">14</div>
<div class="rn" style="top:793.5px;height:38.5px;line-height:38.5px">15</div>
<div class="rn" style="top:832px;height:38.5px;line-height:38.5px">16</div>
<div class="a" style="left:131px;top:188px;width:2px;height:689px;background:#c9c9c9"></div>
<div class="a" style="left:131.5px;top:224.5px;width:1750.5px;height:2px;background:#2a8797"></div>
<div class="a" style="left:131.5px;top:829.5px;width:1745px;height:2px;background:#2a8797"></div>
<div class="a" style="left:1875px;top:224.5px;width:2.2px;height:627px;background:#3b8b98"></div>
<div class="a" style="left:1877px;top:226px;width:5px;height:64px;background:#eef7f9"></div>
<div class="a" style="left:1877px;top:225.5px;width:5px;height:2px;background:#4a8e9b"></div>
<div class="a" style="left:1877px;top:288.5px;width:5px;height:2.5px;background:#4a8e9b"></div>
<div class="a" style="left:1878.6px;top:226px;width:1px;height:63px;background:#4a8e9b"></div>
<div class="a" style="left:1875.5px;top:188px;width:1.2px;height:37px;background:#cfcfcf"></div>
<div class="a" style="left:1882px;top:225.5px;width:22px;height:652px;background:#f8f8f8;border-left:1.5px solid #e0e0e0"></div>
<div class="a" style="left:1883.5px;top:249px;width:20.5px;height:1.5px;background:#e6e6e6"></div>
<div class="a" style="left:1883.5px;top:827px;width:20.5px;height:1.5px;background:#e6e6e6"></div>
<svg style="left:1883px;top:226px" width="21" height="624" viewBox="1883 226 21 624"><path d="M1895.3 232 L1901 242 L1889.6 242 Z" fill="#c3c3c3"/><path d="M1889 835.5 L1901.5 835.5 L1895.3 846 Z" fill="#c3c3c3"/></svg>
<div class="a" style="left:1887.3px;top:254.5px;width:16px;height:70px;border-radius:8px;background:#c1c1c1"></div>
<div class="a" style="left:132.5px;top:851.5px;width:1750px;height:25.5px;background:#f8f8f8;border-top:1.5px solid #dcdcdc"></div>
<div class="a" style="left:156px;top:853px;width:1.5px;height:24px;background:#e6e6e6"></div>
<div class="a" style="left:1858px;top:853px;width:1.5px;height:24px;background:#e6e6e6"></div>
<div class="a" style="left:1882px;top:851.5px;width:22px;height:26px;background:#fff;border-left:1.5px solid #e0e0e0;border-top:1.5px solid #dcdcdc"></div>
<svg style="left:132px;top:852px" width="1750" height="25" viewBox="132 852 1750 25"><path d="M148.7 858.8 L138 864.4 L148.7 870 Z" fill="#c3c3c3"/><path d="M1866 858 L1876.7 864.5 L1866 871 Z" fill="#c3c3c3"/></svg>
<div class="a" style="left:283.5px;top:856.3px;width:642.5px;height:16px;border-radius:8px;background:#c1c1c1"></div>
<div class="hl" style="left:0;top:867.75px;width:132.5px;background:#c9c9c9"></div>
<div class="a" style="left:0;top:876px;width:1904px;height:68px;background:#fafafa;border-top:2px solid #d9d9d9"></div>
<div class="a" style="left:151px;top:878px;width:10px;height:66px;background:linear-gradient(90deg,rgba(0,0,0,0.10),rgba(0,0,0,0))"></div>
<div class="a" style="left:151px;top:878px;width:1px;height:66px;background:#e2e2e2"></div>
<svg style="left:20px;top:898px" width="30" height="30" viewBox="0 0 30 30"><path d="M15.3 5 V26.5 M4.5 15.7 H26" stroke="#222" stroke-width="2.6" fill="none"/></svg>
<svg style="left:96px;top:900px" width="32" height="26" viewBox="0 0 32 26"><path d="M2.8 5.7 H30 M2.8 13 H30 M2.8 20.5 H30" stroke="#222" stroke-width="2.8" fill="none"/></svg>
<div class="tab" style="left:163px;letter-spacing:0.75px">MAP - County to State</div>
<div class="tab" style="left:465px;letter-spacing:0.83px">MAP - Town to State</div>
<div class="tab" style="left:748px">MAP - State to Region</div>
<div class="a" style="left:1019px;top:886px;width:343px;height:53px;border-radius:5px;background:#e2e2e2"></div>
<div class="tab" style="left:1046px;color:#111">Region Population Change</div>
<div class="tab" style="left:1393px">Overall U.S. Demographics</div>
<div class="a" style="left:1691px;top:878px;width:11px;height:66px;background:linear-gradient(90deg,rgba(0,0,0,0),rgba(0,0,0,0.11))"></div>
<div class="a" style="left:1702px;top:878px;width:202px;height:66px;background:#fafafa;border-left:1px solid #e2e2e2"></div>
<svg style="left:1722px;top:896px" width="80" height="34" viewBox="1722 896 80 34"><g class="ic" style="stroke-width:3;stroke:#111"><path d="M1742.8 902.8 L1731.2 912.7 L1742.8 922.6"/><path d="M1780.4 902.8 L1792 912.7 L1780.4 922.6"/></g></svg>
<div class="a" style="left:1826px;top:887.5px;width:65px;text-align:right;font-size:19px;line-height:26px;color:#222;letter-spacing:0.6px">Count</div>
<div class="a" style="left:1834px;top:913px;width:56.5px;text-align:right;font-size:19.5px;line-height:26px;color:#222">0</div>
</body></html>
